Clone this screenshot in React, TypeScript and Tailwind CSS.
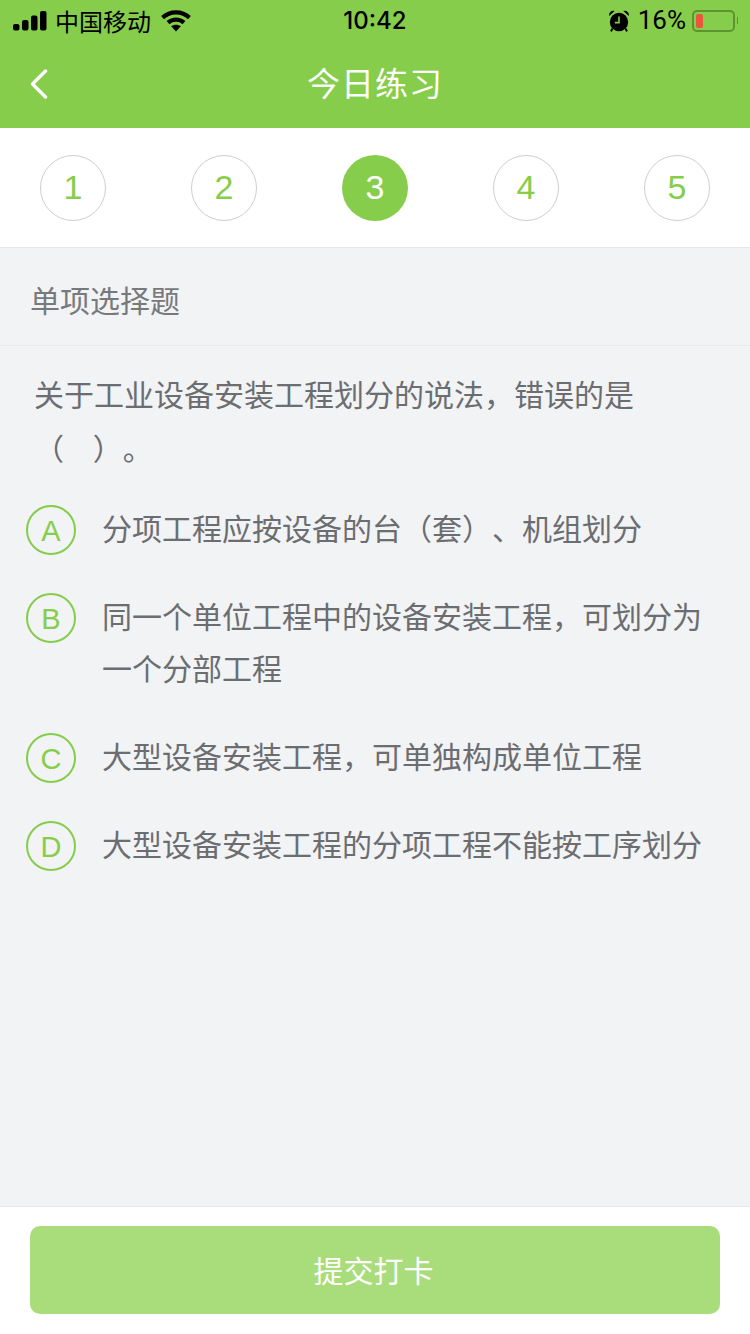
const CJK = "font-['Noto_Sans_CJK_SC','Liberation_Sans',sans-serif] [text-spacing-trim:space-all]";

function Signal() {
  return (
    <svg width="34" height="20" viewBox="0 0 34 20" fill="#000">
      <rect x="0" y="13" width="6.5" height="6.5" rx="2" />
      <rect x="9" y="9" width="6.5" height="10.5" rx="2" />
      <rect x="18" y="4.5" width="6.5" height="15" rx="2" />
      <rect x="27" y="0" width="6.5" height="19.5" rx="2" />
    </svg>
  );
}

function Wifi() {
  return (
    <svg width="30" height="22" viewBox="0 0 30 22" fill="none" stroke="#000" strokeWidth="4.2">
      <path d="M1.6 7.6C9 .6 21 .6 28.4 7.6" />
      <path d="M7 12.6C11.6 8.6 18.4 8.6 23 12.6" />
      <path d="M15 21.5L10.2 16.2C13 14.2 17 14.2 19.8 16.2Z" fill="#000" stroke="none" />
    </svg>
  );
}

function Alarm() {
  return (
    <svg width="20" height="22" viewBox="0 0 20 22" fill="#000">
      <circle cx="10" cy="12" r="9.2" />
      <path d="M0.2 6C-0.4 2.6 2.4 0 5.6 1Z" />
      <path d="M19.8 6C20.4 2.6 17.6 0 14.4 1Z" />
      <path d="M3.6 18.4L2 21.4M16.4 18.4L18 21.4" stroke="#000" strokeWidth="2" />
      <path d="M10 6.5V12.6H5.8" fill="none" stroke="#86cd4b" strokeWidth="1.6" />
    </svg>
  );
}

function Battery() {
  return (
    <div className="flex items-center gap-[2px]">
      <div className="flex h-[22px] w-[43px] items-center rounded-[5px] border-2 border-[#5c9431] p-[2px]">
        <div className="h-full w-[7px] rounded-[2px] bg-[#e9553f]" />
      </div>
      <div className="h-[7px] w-[1px] bg-[#5c9431]" />
    </div>
  );
}

function Step({ n, active }: { n: number; active?: boolean }) {
  return (
    <div
      className={
        active
          ? "flex h-[66px] w-[66px] items-center justify-center rounded-full bg-[#86cd4b] text-[34px] text-white"
          : "flex h-[66px] w-[66px] items-center justify-center rounded-full border border-[#cfcfcf] text-[34px] text-[#86cd4b]"
      }
    >
      {n}
    </div>
  );
}

function Option({ letter, text }: { letter: string; text: string }) {
  return (
    <div className="flex items-start">
      <div className="mb-[-2px] mt-[4px] flex h-[50px] w-[50px] shrink-0 items-center justify-center rounded-full border-2 border-[#86cd4b] pt-[3px] font-['Liberation_Sans'] text-[29px] text-[#86cd4b]">
        {letter}
      </div>
      <div className="ml-[26px] w-[620px] text-[30px] leading-[52px] text-[#6b6d70]">{text}</div>
    </div>
  );
}

export default function App() {
  return (
    <div className={`flex h-[1334px] w-[750px] flex-col overflow-hidden bg-[#f2f3f5] ${CJK}`}>
      <header className="h-[128px] shrink-0 bg-[#86cd4b]">
        <div className="relative flex h-[41px] items-center pl-[13px] pr-[12px] text-[24px] text-black">
          <Signal />
          <span className="ml-[8px]">中国移动</span>
          <span className="ml-[10px] flex"><Wifi /></span>
          <span className="absolute left-0 right-0 text-center font-['Inter'] font-medium">10:42</span>
          <span className="ml-auto flex"><Alarm /></span>
          <span className="ml-[9px] font-['Roboto'] text-[26px]">16%</span>
          <span className="ml-[6px]"><Battery /></span>
        </div>
        <div className="relative flex h-[84px] items-center justify-center text-[33px] tracking-[1px] text-white">
          <svg className="absolute left-[30px] top-[28px]" width="18" height="30" viewBox="0 0 18 30" fill="none" stroke="#fff" strokeWidth="3.4" strokeLinecap="round" strokeLinejoin="round">
            <path d="M15.5 2L2.5 15L15.5 28" />
          </svg>
          今日练习
        </div>
      </header>

      <div className="flex h-[120px] shrink-0 items-center justify-between border-b border-[#e6e6e6] bg-white px-[40px] font-['Liberation_Sans']">
        <Step n={1} />
        <Step n={2} />
        <Step n={3} active />
        <Step n={4} />
        <Step n={5} />
      </div>

      <div className="flex h-[98px] shrink-0 items-center border-b border-[#e9eaec] pl-[30px] pt-[6px] text-[30px] text-[#77797c]">
        单项选择题
      </div>

      <div className="grow">
        <div className="w-[640px] pl-[34px] pt-[20px] text-[30px] leading-[54px] text-[#6b6d70]">
          关于工业设备安装工程划分的说法，错误的是（&nbsp;&nbsp;&nbsp;&nbsp;&#8202;）。
        </div>
        <div className="mt-[27px] flex flex-col gap-[36px] pl-[26px]">
          <Option letter="A" text="分项工程应按设备的台（套）、机组划分" />
          <Option letter="B" text="同一个单位工程中的设备安装工程，可划分为一个分部工程" />
          <Option letter="C" text="大型设备安装工程，可单独构成单位工程" />
          <Option letter="D" text="大型设备安装工程的分项工程不能按工序划分" />
        </div>
      </div>

      <footer className="h-[128px] shrink-0 border-t border-[#e6e7e9] bg-white px-[30px] pt-[19px]">
        <div className="flex h-[88px] items-center justify-center rounded-[10px] bg-[#a9dc7b] pr-[3px] text-[30px] text-white">
          <span className="relative -top-[1px]">提交打卡</span>
        </div>
      </footer>
    </div>
  );
}
